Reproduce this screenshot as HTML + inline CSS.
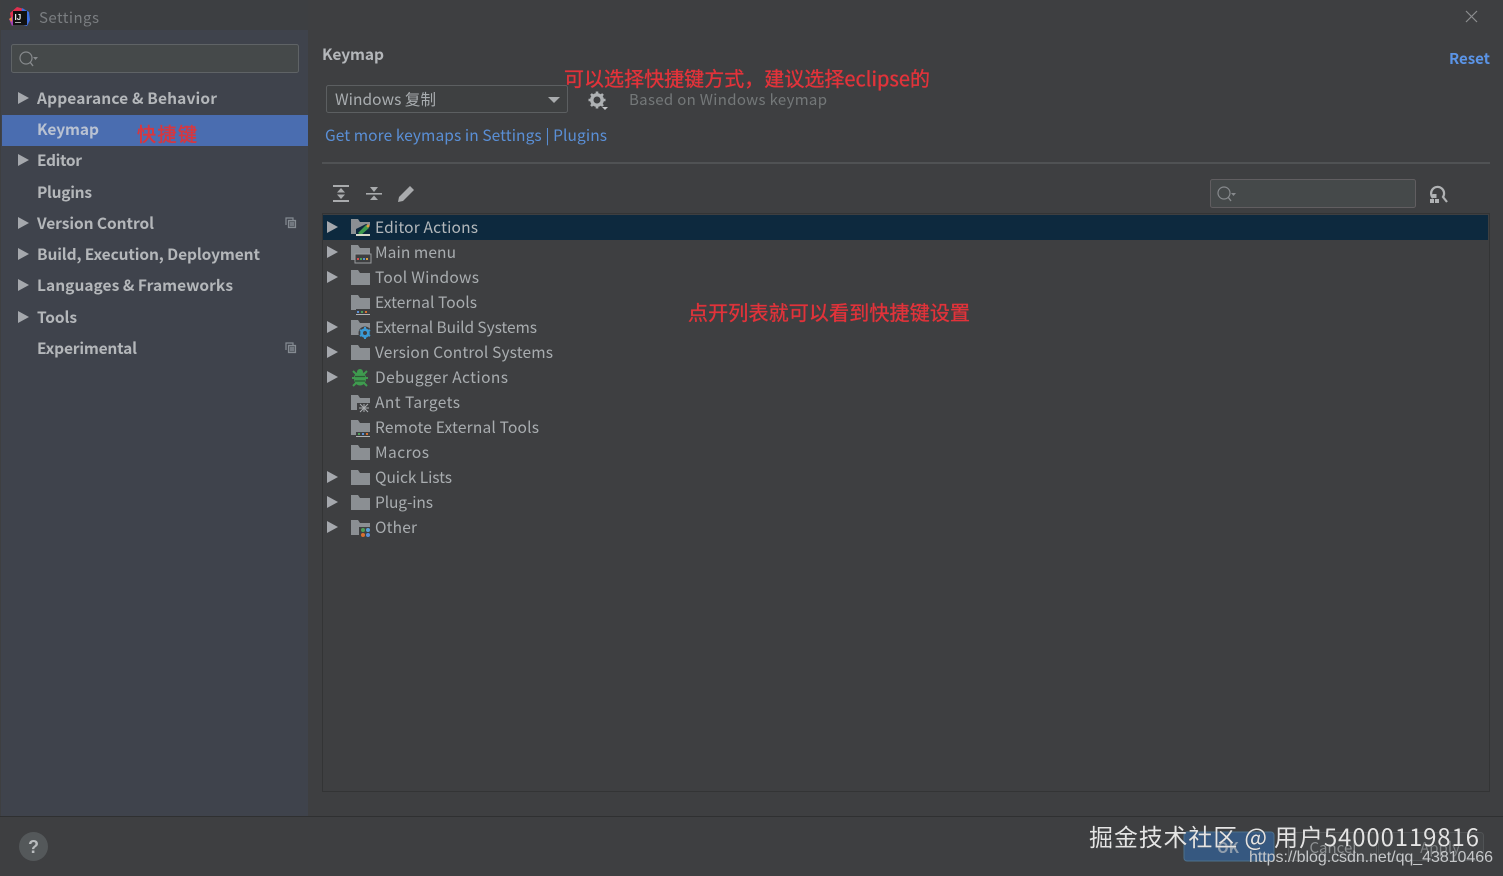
<!DOCTYPE html>
<html><head><meta charset="utf-8"><style>
html,body{margin:0;padding:0;width:1503px;height:876px;overflow:hidden;background:#3e3f41}
svg{display:block;filter:blur(0.35px)}
text{font-family:"Noto Sans CJK SC","Liberation Sans",sans-serif;white-space:pre}
.s{font-size:15.5px;font-weight:700;fill:#b4b7ba}
.t{font-size:15.5px;fill:#a9adb0}
.r{fill:#e2333a;stroke:#e2333a;stroke-width:0.35px;font-family:"Noto Sans CJK SC","Liberation Sans",sans-serif}
.b{fill:#5a8fd6}
</style></head><body>
<svg width="1503" height="876" viewBox="0 0 1503 876" xmlns="http://www.w3.org/2000/svg">
<defs>
<path id="arr" d="M0 0L11 6L0 12Z" fill="#a5a8ad"/>
<path id="fold" d="M0 0H7L9 3H19V15H0Z" fill="#8b8f93"/>
<g id="cp" fill="none" stroke="#858b92" stroke-width="1.2"><path d="M1 8V1H8V3"/><path d="M3.500 3.500H10.500V10.500H3.500Z" fill="#555a61"/><path d="M5 6H9M5 8H9"/></g>
</defs>
<rect width="1503" height="876" fill="#3e3f41"/>
<rect x="1" y="0" width="307" height="816" fill="#3f434c"/>
<rect x="1" y="0" width="307" height="30" fill="#3d3f42"/>
<rect x="0" y="816" width="1503" height="1" fill="#2f3031"/>

<!-- logo -->
<path d="M10 13L17 7L24 9L22 16L12 24Z" fill="#e0304f"/>
<path d="M22 8L29 12L30 20L27 26L20 24Z" fill="#3d6ee0"/>
<path d="M9 19L14 16L15 24L12 26Z" fill="#a03fb0"/>
<path d="M9 19L12 17V22Z" fill="#e78a30"/>
<rect x="13" y="11" width="14" height="14" fill="#111"/>
<text x="14.500" y="20" style="font-size:8px;font-weight:700;fill:#eee;font-family:'Liberation Sans'">IJ</text>
<rect x="15" y="22" width="6" height="1" fill="#aaa"/>
<text x="39" y="23" textLength="60" style="font-size:15px;fill:#7a7d80">Settings</text>
<path d="M1466 11L1477 22M1477 11L1466 22" stroke="#8c8e90" stroke-width="1.200"/>

<!-- sidebar search -->
<rect x="11.500" y="44.500" width="287" height="28" rx="2" fill="#45494a" stroke="#5f6366"/>
<circle cx="26" cy="58" r="6" fill="none" stroke="#878a8d" stroke-width="1.200"/>
<path d="M30 62L33 66" stroke="#878a8d" stroke-width="1.400"/><path d="M33 57H38L35.500 60Z" fill="#878a8d"/>

<!-- sidebar -->
<rect x="2" y="115" width="306" height="31" fill="#4a6db0"/>
<use href="#arr" x="18" y="92"/>
<text class="s" x="37" y="104" textLength="180">Appearance &amp; Behavior</text>
<text class="s" x="37" y="135" textLength="62" style="fill:#b9c2d2">Keymap</text>
<text class="r" x="137" y="141" textLength="60" style="font-size:19px;fill:#d8373f;stroke:#d8373f;stroke-width:0.5px">快捷键</text>
<use href="#arr" x="18" y="154"/>
<text class="s" x="37" y="166" textLength="45">Editor</text>
<text class="s" x="37" y="198" textLength="55">Plugins</text>
<use href="#arr" x="18" y="217"/>
<text class="s" x="37" y="229" textLength="117">Version Control</text>
<use href="#cp" x="285" y="217"/>
<use href="#arr" x="18" y="248"/>
<text class="s" x="37" y="260" textLength="223">Build, Execution, Deployment</text>
<use href="#arr" x="18" y="279"/>
<text class="s" x="37" y="291" textLength="196">Languages &amp; Frameworks</text>
<use href="#arr" x="18" y="311"/>
<text class="s" x="37" y="323" textLength="40">Tools</text>
<text class="s" x="37" y="354" textLength="100">Experimental</text>
<use href="#cp" x="285" y="342"/>

<!-- header -->
<text class="s" x="322" y="60" textLength="62">Keymap</text>
<text x="1449" y="64" textLength="41" style="font-size:15px;font-weight:700;fill:#5b94e6">Reset</text>

<rect x="326.500" y="85.500" width="241" height="27" rx="2" fill="#3e4041" stroke="#5c5f61"/>
<text class="t" x="335" y="105" textLength="101" style="font-size:15.500px">Windows 复制</text>
<path d="M548 97H560L554 103Z" fill="#a9acae"/>
<!-- gear -->
<g transform="translate(597 100)">
<circle r="5.200" fill="none" stroke="#aeb1b3" stroke-width="3.400"/>
<g stroke="#aeb1b3" stroke-width="2.600"><path d="M0 -8.500V-6M0 6V8.500M-8.500 0H-6M6 0H8.500M-6 -6L-4.400 -4.400M4.400 4.400L6 6M-6 6L-4.400 4.400M4.400 -4.400L6 -6"/></g>
</g>
<path d="M602 107H608L605 110Z" fill="#c4c6c8"/>
<text x="629" y="105" textLength="198" style="font-size:15px;fill:#747879">Based on Windows keymap</text>
<text class="r" x="564" y="86" textLength="366" style="font-size:20px">可以选择快捷键方式，建议选择eclipse的</text>
<text class="b" x="325" y="141" textLength="282" style="font-size:15.500px">Get more keymaps in Settings | Plugins</text>
<rect x="322" y="162" width="1168" height="2" fill="#505254"/>

<!-- toolbar -->
<g fill="#a9abad">
<rect x="333" y="185" width="16" height="2"/><rect x="333" y="200" width="16" height="2"/>
<path d="M341 188L345 192.500H337ZM341 199L337 194.500H345Z"/>
<rect x="366" y="193" width="16" height="1.600"/>
<path d="M374 192L370 187H378ZM374 195.500L378 200H370Z"/>
<path d="M399 197L410 186L414 190L403 201L398 202Z"/>
</g>
<rect x="1210.500" y="179.500" width="205" height="28" rx="2" fill="#45494a" stroke="#615e61"/>
<circle cx="1224" cy="193" r="6" fill="none" stroke="#878a8d" stroke-width="1.200"/>
<path d="M1228 197L1231 201" stroke="#878a8d" stroke-width="1.400"/><path d="M1231 193H1236L1233.500 196Z" fill="#878a8d"/>
<path d="M1433 198A6.500 6.500 0 1 1 1443 197L1447 202" fill="none" stroke="#b0b2b4" stroke-width="2.200"/>
<g fill="#b0b2b4"><rect x="1430" y="199" width="4" height="4"/><rect x="1435" y="199" width="4" height="4"/><rect x="1432.500" y="194" width="4" height="4"/></g>

<!-- tree panel -->
<rect x="322.500" y="213.500" width="1167" height="578" fill="#3e3f41" stroke="#333435"/>
<rect x="323" y="215" width="1165" height="25" fill="#0d293e"/>

<use href="#arr" x="327" y="221"/>
<use href="#arr" x="327" y="246"/>
<use href="#arr" x="327" y="271"/>
<use href="#arr" x="327" y="321"/>
<use href="#arr" x="327" y="346"/>
<use href="#arr" x="327" y="371"/>
<use href="#arr" x="327" y="471"/>
<use href="#arr" x="327" y="496"/>
<use href="#arr" x="327" y="521"/>

<use href="#fold" x="351" y="219"/>
<path d="M356 229L366 224L371 226V236H356Z" fill="#0d293e"/>
<path d="M358 233L366 225L369 228L361 235Z" fill="#3e9a4e"/><rect x="356" y="234" width="14" height="2" fill="#d8d8c8"/><circle cx="368" cy="226" r="1.500" fill="#e2a040"/>
<use href="#fold" x="351" y="245"/>
<rect x="355" y="254" width="16" height="9" fill="#3e3f41" stroke="#9a9da0"/>
<rect x="357" y="258" width="2" height="2" fill="#d65050"/><rect x="360" y="258" width="2" height="2" fill="#4f9f58"/><rect x="363" y="258" width="2" height="2" fill="#5a8fd6"/><rect x="366" y="258" width="2" height="2" fill="#d8a040"/>
<use href="#fold" x="351" y="270"/>
<use href="#fold" x="351" y="295"/>
<rect x="356" y="309" width="15" height="5" fill="#3e3f41"/><rect x="357" y="311" width="2" height="2" fill="#5a8fd6"/><rect x="361" y="311" width="2" height="2" fill="#4f9f58"/><rect x="365" y="311" width="2" height="2" fill="#d87030"/><rect x="356" y="314" width="14" height="1" fill="#b0b2b4"/>
<use href="#fold" x="351" y="320"/>
<circle cx="365" cy="333" r="6.500" fill="#3e3f41"/>
<g transform="translate(365 333)"><circle r="3.400" fill="none" stroke="#3a9ad6" stroke-width="2.800"/><path d="M0 -6V-4M0 4V6M-5 -3L-3.400 -2M3.400 2L5 3M-5 3L-3.400 2M3.400 -2L5 -3" stroke="#3a9ad6" stroke-width="2"/></g>
<use href="#fold" x="351" y="345"/>
<!-- bug -->
<ellipse cx="360" cy="378.500" rx="6" ry="7" fill="#3f9b4f"/>
<circle cx="360" cy="372" r="3" fill="#3f9b4f"/>
<path d="M353 371L356 374M367 371L364 374M352 378H368M353 386L356 383M367 386L364 383" stroke="#3f9b4f" stroke-width="2"/>
<path d="M355 376.500H365M355 381H365" stroke="#2b5a34" stroke-width="1.200"/>
<use href="#fold" x="351" y="395"/>
<rect x="357" y="403" width="14" height="10" fill="#3e3f41"/>
<path d="M359 408H369M364 404V412M360 404L368 412M368 404L360 412" stroke="#a9acaf" stroke-width="1"/>
<use href="#fold" x="351" y="420"/>
<rect x="356" y="432" width="15" height="5" fill="#3e3f41"/><rect x="358" y="433" width="2" height="2" fill="#4f9f58"/><rect x="362" y="433" width="2" height="2" fill="#5a8fd6"/><rect x="366" y="433" width="2" height="2" fill="#d87030"/><rect x="356" y="436" width="14" height="1" fill="#b0b2b4"/>
<use href="#fold" x="351" y="445"/>
<use href="#fold" x="351" y="470"/>
<use href="#fold" x="351" y="495"/>
<use href="#fold" x="351" y="520"/>
<rect x="359" y="527" width="12" height="11" fill="#3e3f41"/>
<circle cx="363" cy="530" r="2" fill="#4f9f58"/><circle cx="368" cy="530" r="2" fill="#5a9fd6"/><circle cx="363" cy="535" r="2" fill="#d87030"/><circle cx="368" cy="535" r="2" fill="#5a8fd6"/>

<text class="t" x="375" y="233" textLength="103" style="fill:#b3b8bb">Editor Actions</text>
<text class="t" x="375" y="258" textLength="81">Main menu</text>
<text class="t" x="375" y="283" textLength="104">Tool Windows</text>
<text class="t" x="375" y="308" textLength="102">External Tools</text>
<text class="t" x="375" y="333" textLength="162">External Build Systems</text>
<text class="t" x="375" y="358" textLength="178">Version Control Systems</text>
<text class="t" x="375" y="383" textLength="133">Debugger Actions</text>
<text class="t" x="375" y="408" textLength="85">Ant Targets</text>
<text class="t" x="375" y="433" textLength="164">Remote External Tools</text>
<text class="t" x="375" y="458" textLength="54">Macros</text>
<text class="t" x="375" y="483" textLength="77">Quick Lists</text>
<text class="t" x="375" y="508" textLength="58">Plug-ins</text>
<text class="t" x="375" y="533" textLength="42">Other</text>

<text class="r" x="688" y="320" textLength="282" style="font-size:20px">点开列表就可以看到快捷键设置</text>

<!-- footer -->
<circle cx="33.500" cy="846.500" r="14.500" fill="#54585a"/>
<text x="33.500" y="853" text-anchor="middle" style="font-size:18px;font-weight:700;fill:#b9bcbe;font-family:'Liberation Sans'">?</text>
<rect x="1184" y="832" width="90" height="29" rx="3" fill="#365880" stroke="#4c708c"/>
<text x="1228" y="853" text-anchor="middle" style="font-size:15px;font-weight:700;fill:#8f9dac">OK</text>
<rect x="1288.500" y="832.500" width="88" height="28" rx="3" fill="#444648" stroke="#55585a"/>
<text x="1333" y="853" text-anchor="middle" style="font-size:15px;fill:#8e9193">Cancel</text>
<rect x="1378.500" y="832.500" width="105" height="28" rx="3" fill="#434547" stroke="#505355"/>
<text x="1440" y="853" text-anchor="middle" style="font-size:15px;fill:#7c7f81">Apply</text>

<!-- watermarks -->
<text x="1089" y="846" textLength="390" style="font-size:24px;fill:#e4e4e4;stroke:#2a2a2a;stroke-width:0.300px;paint-order:stroke">掘金技术社区 @ 用户54000119816</text>
<text x="1249" y="862" textLength="244" style="font-size:16px;fill:#c6c8ca;font-family:'Liberation Sans'">https://blog.csdn.net/qq_43810466</text>
</svg>
</body></html>
